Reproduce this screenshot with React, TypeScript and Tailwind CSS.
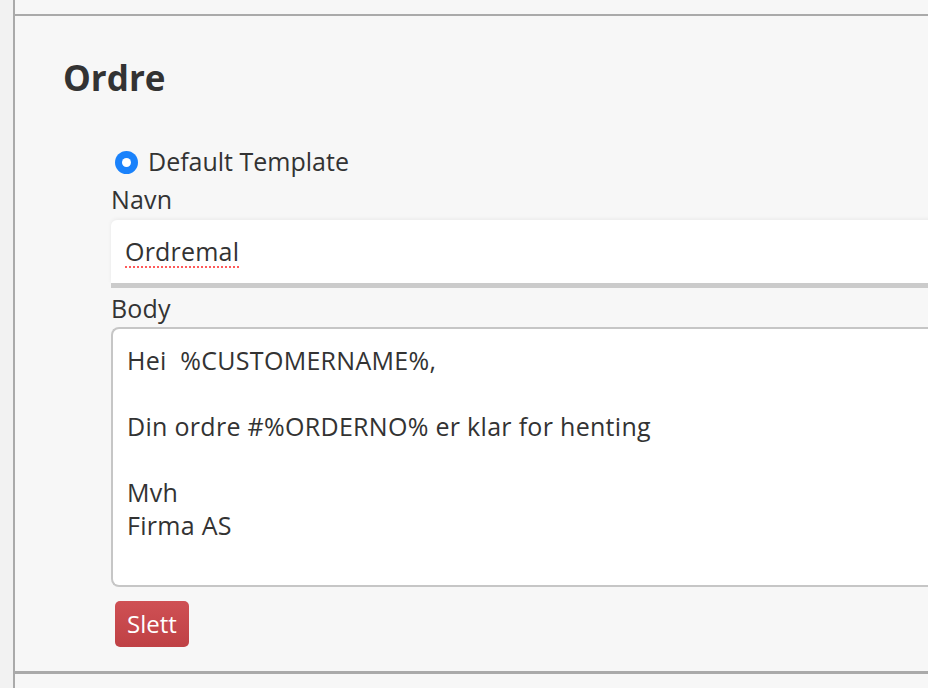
const App = () => {
  const body = `Hei  %CUSTOMERNAME%,

Din ordre #%ORDERNO% er klar for henting

Mvh
Firma AS`;

  return (
    <div className="w-[928px] h-[688px] overflow-hidden flex bg-[#f2f2f2] text-[#333]" style={{ fontFamily: "'Open Sans', Lato, sans-serif" }}>
      <div className="w-[13px] shrink-0" />
      <div className="flex-1 border-l-2 border-[#aaaaaa] bg-[#f7f7f7] flex flex-col">
        <div className="h-[14px] shrink-0" />
        <div className="border-t-2 border-b-[3px] border-[#aaaaaa] h-[660px] shrink-0 pl-[48px]">
          <h2 className="mt-[42px] text-[35px] leading-[40px] font-bold text-[#333]">Ordre</h2>

          <div className="ml-[48px] mt-[49px] w-[900px]">
            {/* Template choice */}
            <label className="flex items-center gap-[10px] h-[30px] pl-[4px]">
              <span className="w-[23px] h-[23px] rounded-full bg-[#1a82fb] flex items-center justify-center">
                <span className="w-[9px] h-[9px] rounded-full bg-white" />
              </span>
              <span className="text-[25px]">Default Template</span>
            </label>

            <div className="text-[25px] tracking-[0.2px] leading-[30px] mt-[7px]">Navn</div>
            <div className="mt-[6px] h-[63px] bg-white rounded-tl-[6px] shadow-[0_5px_0_#cbcbcb,0_-1px_4px_rgba(0,0,0,0.06)] flex items-center px-[14px]">
              <span className="text-[25px] tracking-[0.2px] underline decoration-dotted decoration-[#ff5a5a] decoration-2 underline-offset-[6px]">Ordremal</span>
            </div>

            <div className="text-[25px] tracking-[0.2px] leading-[30px] mt-[10px]">Body</div>
            <div className="mt-[4px] h-[260px] bg-white border-2 border-r-0 border-[#c6c6c6] rounded-l-[8px] px-[14px] pt-[15px] text-[25px] tracking-[0.3px] leading-[33px] whitespace-pre-wrap">
              {body}
            </div>

            <button className="mt-[14px] ml-[4px] h-[46px] px-[12px] rounded-[5px] bg-gradient-to-b from-[#cf5054] to-[#bf4145] text-white text-[24px]">
              Slett
            </button>
          </div>
        </div>
      </div>
    </div>
  );
};

export default App;
